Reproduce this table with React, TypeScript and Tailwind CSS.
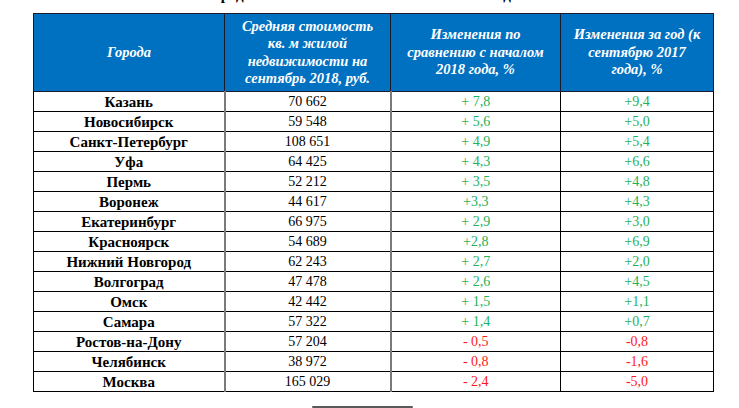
import React from "react";

interface Row {
  city: string;
  price: string;
  ytd: string;
  yoy: string;
}

const rows: Row[] = [
  { city: "Казань", price: "70 662", ytd: "+ 7,8", yoy: "+9,4" },
  { city: "Новосибирск", price: "59 548", ytd: "+ 5,6", yoy: "+5,0" },
  { city: "Санкт-Петербург", price: "108 651", ytd: "+ 4,9", yoy: "+5,4" },
  { city: "Уфа", price: "64 425", ytd: "+ 4,3", yoy: "+6,6" },
  { city: "Пермь", price: "52 212", ytd: "+ 3,5", yoy: "+4,8" },
  { city: "Воронеж", price: "44 617", ytd: "+3,3", yoy: "+4,3" },
  { city: "Екатеринбург", price: "66 975", ytd: "+ 2,9", yoy: "+3,0" },
  { city: "Красноярск", price: "54 689", ytd: "+2,8", yoy: "+6,9" },
  { city: "Нижний Новгород", price: "62 243", ytd: "+ 2,7", yoy: "+2,0" },
  { city: "Волгоград", price: "47 478", ytd: "+ 2,6", yoy: "+4,5" },
  { city: "Омск", price: "42 442", ytd: "+ 1,5", yoy: "+1,1" },
  { city: "Самара", price: "57 322", ytd: "+ 1,4", yoy: "+0,7" },
  { city: "Ростов-на-Дону", price: "57 204", ytd: "- 0,5", yoy: "-0,8" },
  { city: "Челябинск", price: "38 972", ytd: "- 0,8", yoy: "-1,6" },
  { city: "Москва", price: "165 029", ytd: "- 2,4", yoy: "-5,0" },
];

export default function App() {
  return (
    <div className="w-[739px] h-[408px] bg-white overflow-hidden [font-family:'Liberation_Serif','Times_New_Roman',serif] text-[14px] text-black">
      {/* title line, mostly scrolled out of view */}
      <div className="h-[13px] overflow-hidden">
        <p className="-mt-[14px] pl-[70px] font-bold text-[15px] leading-[18px]">
          Стоимость жилья в городах-миллионниках и её изменение за год
        </p>
      </div>

      <table className="ml-[33px] w-[680px] border-collapse table-fixed border border-black">
        <colgroup>
          <col className="w-[191px]" />
          <col className="w-[166px]" />
          <col className="w-[170px]" />
          <col className="w-[153px]" />
        </colgroup>
        <thead>
          <tr className="h-[78px] bg-[#0070c0] text-white italic text-[14.5px] leading-[17.5px]">
            <th className="border border-[#1a1a2e] text-center align-middle font-bold">Города</th>
            <th className="border border-[#1a1a2e] text-center align-middle font-bold">
              Средняя стоимость
              <br />
              кв. м жилой
              <br />
              недвижимости на
              <br />
              сентябрь 2018, руб.
            </th>
            <th className="border border-[#1a1a2e] text-center align-middle font-bold">
              Изменения по
              <br />
              сравнению с началом
              <br />
              2018 года, %
            </th>
            <th className="border border-[#1a1a2e] text-center align-middle font-bold">
              Изменения за год (к
              <br />
              сентябрю 2017
              <br />
              года), %
            </th>
          </tr>
        </thead>
        <tbody>
          {rows.map((r) => {
            const neg = r.ytd.startsWith("-");
            const color = neg ? "text-[#ff1a1a]" : "text-[#1fb25a]";
            return (
              <tr key={r.city} className="h-[20px] leading-[18px]">
                <td className="border-y border-black border-r-2 border-r-[#7a7a7a] text-center font-bold text-[15px]">
                  {r.city}
                </td>
                <td className="border-y border-black border-r-2 border-r-[#7a7a7a] text-center">
                  {r.price}
                </td>
                <td className={`border border-black text-center ${color}`}>{r.ytd}</td>
                <td className={`border border-black text-center ${color}`}>{r.yoy}</td>
              </tr>
            );
          })}
        </tbody>
      </table>

      <div className="mt-[14px] ml-[312px] w-[101px] h-[2px] rounded-full bg-[#5a5a5a]" />
    </div>
  );
}
